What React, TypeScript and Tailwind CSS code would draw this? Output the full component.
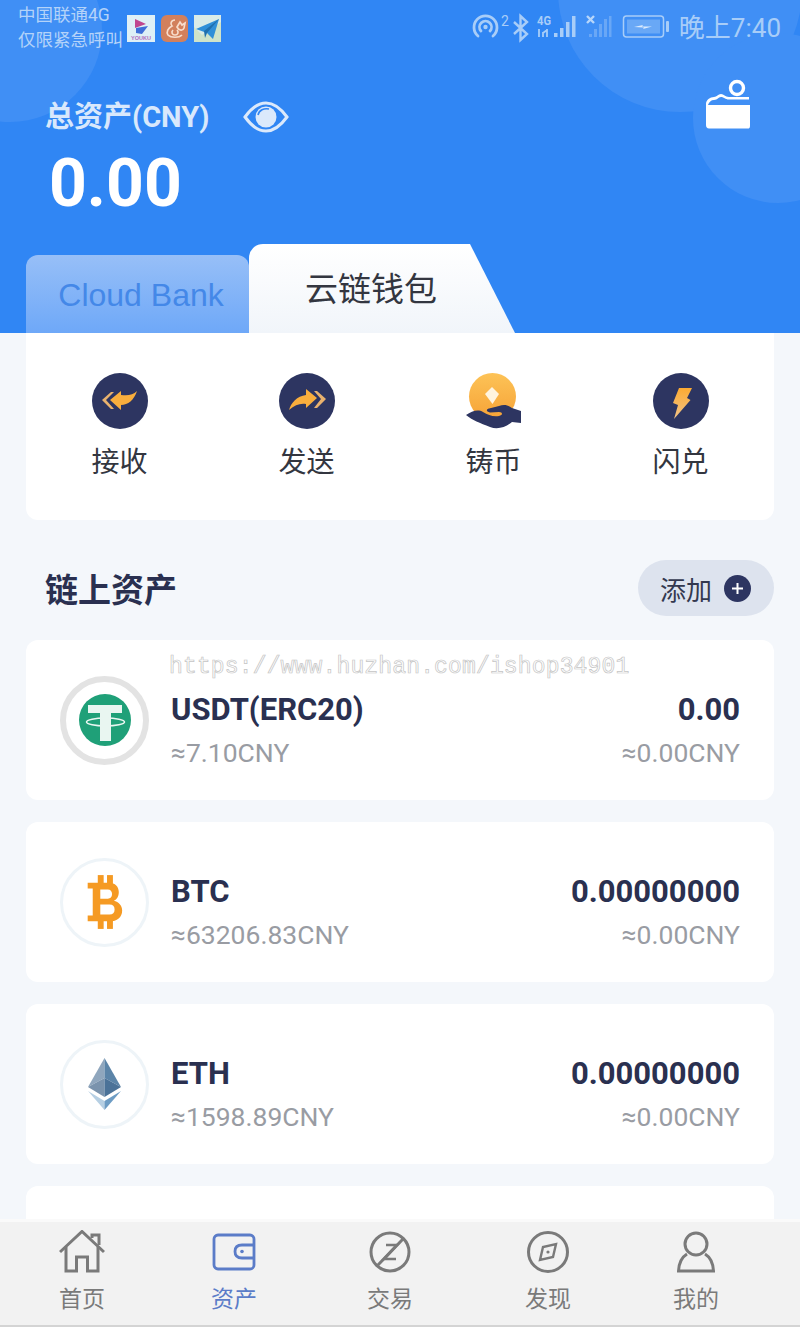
import React from "react";

const Youku = () => (
  <svg width="28" height="27" viewBox="0 0 28 27">
    <rect width="28" height="27" fill="#dff0f6" />
    <path d="M8 4 L19 9 L8 13 Z" fill="#c0478f" />
    <path d="M9 13 L21 11 L15 19 L9 18 Z" fill="#3f6fd8" />
    <text x="14" y="25" textAnchor="middle" fontSize="5.5" fontWeight="700" fill="#b06fc0" fontFamily="Liberation Sans, sans-serif">YOUKU</text>
  </svg>
);

const UC = () => (
  <svg width="27" height="27" viewBox="0 0 27 27">
    <rect width="27" height="27" rx="6" fill="#d2805c" />
    <path d="M14 5 C10 5 9 9 11 11 C7 13 5 17 7 20 C10 23 18 23 21 20 M12 15 C10 17 11 20 14 20 C17 20 18 17 16 15 M16 12 L19 7 L21 10 L24 8 L23 13 C22 16 18 16 16 12Z" fill="none" stroke="#f7dccb" strokeWidth="1.7" />
  </svg>
);

const Plane = () => (
  <svg width="27" height="27" viewBox="0 0 27 27">
    <rect width="27" height="27" fill="#cfe3c9" />
    <path d="M0 0 H27 V7 L8 20 L0 12 Z" fill="#d9ebe8" />
    <path d="M2 14 L25 4 L19 24 L13 18 Z" fill="#2f8fd8" />
    <path d="M25 4 L10 16 L11 23 L13 18 Z" fill="#1f6fae" />
  </svg>
);

const StatusIcons = () => (
  <svg width="198" height="30" viewBox="0 0 198 30" className="shrink-0">
    <g fill="none" stroke="#a8cdf8" strokeWidth="2.8" strokeLinecap="round">
      <path d="M6 23 A11.500 11.500 0 1 1 21 23" />
      <path d="M9 18 A6 6 0 1 1 18 18" />
    </g>
    <circle cx="13.500" cy="14" r="2.200" fill="#a8cdf8" />
    <text x="29" y="13" fontSize="14" fill="#a8cdf8" fontFamily="Roboto, sans-serif">2</text>
    <path d="M42 9 L55 21 L48.500 27 V3 L55 9 L42 21" fill="none" stroke="#a8cdf8" strokeWidth="2.400" />
    <text x="65" y="12" fontSize="12.500" fontWeight="700" fill="#a8cdf8" fontFamily="Roboto, sans-serif" textLength="14" lengthAdjust="spacingAndGlyphs">4G</text>
    <path d="M67 16 V24 M75 24 V16 M71 24 V19 M71 20 L75 17" stroke="#a8cdf8" strokeWidth="1.800" fill="none" />
    <g fill="#a8cdf8">
      <rect x="82" y="20" width="3.500" height="4" />
      <rect x="88" y="15" width="3.500" height="9" />
      <rect x="94" y="9" width="3.500" height="15" />
      <rect x="100" y="3" width="3.500" height="21" />
    </g>
    <path d="M115 3 L122 10 M122 3 L115 10" stroke="#b7d6fa" strokeWidth="2.400" />
    <g fill="#a8cdf8" opacity="0.4">
      <rect x="117" y="21" width="3" height="3" />
      <rect x="122" y="16" width="3" height="8" />
      <rect x="127" y="11" width="3" height="13" />
      <rect x="132" y="6" width="3" height="18" />
      <rect x="137" y="3" width="2.500" height="21" />
    </g>
    <rect x="151.500" y="3" width="40" height="21" rx="3" fill="none" stroke="#a8cdf8" strokeWidth="1.500" />
    <rect x="155" y="6.500" width="33" height="14" fill="#a8cdf8" opacity="0.4" />
    <path d="M162 14 L171 12 L170 13.500 L180 13.500 L171 16 L172 14.500Z" fill="#dcebfd" />
    <rect x="194" y="8" width="3" height="11" rx="1" fill="#a8cdf8" />
  </svg>
);

const Eye = () => (
  <svg width="46" height="32" viewBox="0 0 46 32">
    <path d="M2 16 C10 5 17 2 23 2 C29 2 36 5 44 16 C36 27 29 30 23 30 C17 30 10 27 2 16 Z" fill="none" stroke="#dbe9fb" strokeWidth="3" />
    <circle cx="23" cy="16" r="10.500" fill="#dbe9fb" />
    <path d="M15 14 C16 9 21 7 26 8" fill="none" stroke="#3086f4" strokeWidth="1.600" />
  </svg>
);

const WalletTop = () => (
  <svg width="46" height="50" viewBox="0 0 46 50">
    <circle cx="32" cy="9" r="6.500" fill="none" stroke="#fff" strokeWidth="3.400" />
    <path d="M1 25 C1 21 5 18 9 18 C12 18 13 15 16 15 C19 15 20 18 24 18 H44 V20.500 H24 C20 20.500 19 18 16 18 C13 18 13 21 9 21 C6 21 4 23 3 26 H45 V47 C45 49 44 49.500 43 49.500 H4 C2 49.500 1 48 1 46 Z" fill="#fff" />
  </svg>
);

const Receive = () => (
  <svg width="56" height="56" viewBox="0 0 56 56">
    <circle cx="28" cy="28" r="28" fill="#2d3561" />
    <path d="M10 27 L19 19 L22 19 L14 27 L22 36 L19 36 Z" fill="#e9b26e" />
    <path d="M18 27 L29 18 L29 22 C36 23 41 22 45 18 C42 27 36 32 29 32 L29 37 Z" fill="#f9ae3d" />
  </svg>
);

const Send = () => (
  <svg width="56" height="56" viewBox="0 0 56 56">
    <circle cx="28" cy="28" r="28" fill="#2d3561" />
    <path d="M47 26 L38 18 L35 18 L42 26 L35 35 L38 35 Z" fill="#e9b26e" />
    <path d="M38 25 L27 16 L27 22 C18 23 12 30 10 37 C16 32 21 30 27 31 L27 35 Z" fill="#f9ae3d" />
  </svg>
);

const Mint = () => (
  <svg width="56" height="56" viewBox="0 0 56 56">
    <defs>
      <linearGradient id="coin" x1="0" y1="0" x2="0" y2="1">
        <stop offset="0" stopColor="#fdc357" />
        <stop offset="1" stopColor="#f6a236" />
      </linearGradient>
    </defs>
    <circle cx="26.500" cy="23.500" r="23.500" fill="url(#coin)" />
    <path d="M26 14 L33 21 L26.500 31 L19 21 Z" fill="#fff4df" />
    <path d="M0 42 C6 38 12 36 17 39 C22 42 27 44 33 43 C37 42.500 37 39 33 39 L24 39.500 C20 39 20 36 23 35.500 L33 33 C38 31 42 32 46 35 L55 38 V50 L46 49 C40 54 32 57 24 54 C14 50 6 47 0 42 Z" fill="#2d3561" />
  </svg>
);

const Bolt = () => (
  <svg width="56" height="56" viewBox="0 0 56 56">
    <defs>
      <linearGradient id="bolt" x1="0" y1="0" x2="0" y2="1">
        <stop offset="0" stopColor="#fbaa32" />
        <stop offset="1" stopColor="#f2c488" />
      </linearGradient>
    </defs>
    <circle cx="28" cy="28" r="28" fill="#2d3561" />
    <path d="M26 15 H39 L34 25 L37.500 27 L21 46 L25 32 L20 30 Z" fill="url(#bolt)" />
  </svg>
);

const Plus = () => (
  <span className="flex h-[27px] w-[27px] items-center justify-center rounded-full bg-[#2d3561]">
    <svg width="13" height="13" viewBox="0 0 13 13">
      <path d="M6.500 1 V12 M1 6.500 H12" stroke="#fff" strokeWidth="2" />
    </svg>
  </span>
);

const Tether = () => (
  <svg width="52" height="52" viewBox="0 0 52 52">
    <circle cx="26" cy="26" r="26" fill="#1fa078" />
    <path d="M9 11 H43 V19 H32 V47 H21 V19 H9 Z" fill="#e9f6f1" />
    <ellipse cx="26.500" cy="28" rx="19" ry="4" fill="none" stroke="#e9f6f1" strokeWidth="1.500" />
  </svg>
);

const Btc = () => (
  <svg width="37" height="54" viewBox="0 0 44 64">
    <g fill="#f59a23">
      <rect x="14" y="0" width="7" height="12" />
      <rect x="25" y="0" width="7" height="12" />
      <rect x="14" y="52" width="7" height="12" />
      <rect x="25" y="52" width="7" height="12" />
      <path fillRule="evenodd" d="M2 9 H27 C35 9 39 14 39 20 C39 25 37 29 33 30.500 C39 32 43 36 43 42 C43 50 37 55 28 55 H2 V48 H8 V16 H2 Z M17 17 V28 H26 C29 28 31 26 31 22.500 C31 19 29 17 26 17 Z M17 35 V47 H28 C32 47 34 45 34 41 C34 37 32 35 28 35 Z" />
    </g>
  </svg>
);

const Eth = () => (
  <svg width="33" height="52" viewBox="0 0 33 52">
    <path d="M16.500 0 L0 29 L16.500 20 Z" fill="#8fa6bd" />
    <path d="M16.500 0 L33 29 L16.500 20 Z" fill="#5b84a8" />
    <path d="M0 29 L16.500 20 V39 Z" fill="#7a93ad" />
    <path d="M33 29 L16.500 20 V39 Z" fill="#4b7298" />
    <path d="M0 33 L16.500 43 V52 Z" fill="#b6cfe3" />
    <path d="M33 33 L16.500 43 V52 Z" fill="#6d9cc4" />
  </svg>
);

const HomeIcon = () => (
  <svg width="46" height="44" viewBox="0 0 46 44" fill="none" stroke="#7a7a7a" strokeWidth="3">
    <path d="M1 22 L23 1.500 L45 22" />
    <path d="M33 8 L33 5 H40 V15" />
    <path d="M7 17 V41 H17.500 V27 H28.500 V41 H39 V17" />
  </svg>
);

const WalletIcon = () => (
  <svg width="44" height="38" viewBox="0 0 44 38" fill="none" stroke="#5b7cc8" strokeWidth="2.800">
    <rect x="2" y="2" width="40" height="34" rx="4" />
    <path d="M42 12 H30 C25 12 23 15 23 18.500 C23 22 25 25 30 25 H42" />
    <circle cx="30" cy="18.500" r="1.800" fill="#5b7cc8" stroke="none" />
  </svg>
);

const TradeIcon = () => (
  <svg width="42" height="42" viewBox="0 0 42 42" fill="none" stroke="#7a7a7a" strokeWidth="3">
    <circle cx="21" cy="21" r="19" />
    <path d="M8 35 L34 8" />
    <path d="M17 14 H28 L15 28 H27" strokeWidth="2.600" />
  </svg>
);

const CompassIcon = () => (
  <svg width="42" height="42" viewBox="0 0 42 42" fill="none" stroke="#7a7a7a" strokeWidth="3">
    <circle cx="21" cy="21" r="19.500" />
    <path d="M13 29 L16 16 L29 13 L26 26 Z" strokeWidth="2.400" />
    <circle cx="21" cy="21" r="1.600" fill="#7a7a7a" stroke="none" />
  </svg>
);

const UserIcon = () => (
  <svg width="38" height="42" viewBox="0 0 38 42" fill="none" stroke="#7a7a7a" strokeWidth="3">
    <circle cx="19" cy="13" r="11" />
    <path d="M10 23 C5 26 2 31 1.500 40 H36.500 C36 31 33 26 28 23" />
  </svg>
);

const actions = [
  { label: "接收", icon: <Receive /> },
  { label: "发送", icon: <Send /> },
  { label: "铸币", icon: <Mint /> },
  { label: "闪兑", icon: <Bolt /> },
];

const coins = [
  { name: "USDT(ERC20)", rate: "≈7.10CNY", amount: "0.00", value: "≈0.00CNY", icon: <Tether />, ring: "border-[6px] border-[#e3e3e3]" },
  { name: "BTC", rate: "≈63206.83CNY", amount: "0.00000000", value: "≈0.00CNY", icon: <Btc />, ring: "border-[3px] border-[#eef4f8]" },
  { name: "ETH", rate: "≈1598.89CNY", amount: "0.00000000", value: "≈0.00CNY", icon: <Eth />, ring: "border-[3px] border-[#eef4f8]" },
];

const tabs = [
  { label: "首页", icon: <HomeIcon />, cls: "ml-[52px] text-[#7a7a7a]" },
  { label: "资产", icon: <WalletIcon />, cls: "ml-[92px] text-[#5b7cc8]" },
  { label: "交易", icon: <TradeIcon />, cls: "ml-[96px] text-[#7a7a7a]" },
  { label: "发现", icon: <CompassIcon />, cls: "ml-[98px] text-[#7a7a7a]" },
  { label: "我的", icon: <UserIcon />, cls: "ml-[88px] text-[#7a7a7a]" },
];

export default function App() {
  return (
    <div className="relative flex h-[1327px] w-[800px] flex-col overflow-hidden bg-[#f4f7fb] [font-family:Roboto,'Noto_Sans_CJK_SC',sans-serif]">
      {/* Blue header */}
      <header className="relative flex h-[333px] shrink-0 flex-col overflow-hidden bg-[#3086f4]">
        <div className="absolute left-[-82px] top-[-62px] h-[184px] w-[184px] rounded-full bg-[#408ff5]" />
        <div className="absolute left-[558px] top-[-132px] h-[244px] w-[244px] rounded-full bg-[#408ff5]" />
        <div className="absolute left-[693px] top-[33px] h-[170px] w-[170px] rounded-full bg-[#408ff5]" />

        <div className="relative flex h-[56px] items-center pl-[18px] pr-[19px]">
          <div className="w-[109px] text-[17.5px] leading-[25px] text-[#b4d3f9]">
            <div>中国联通4G</div>
            <div className="whitespace-nowrap">仅限紧急呼叫</div>
          </div>
          <div className="flex items-center gap-[6px]">
            <Youku />
            <UC />
            <Plane />
          </div>
          <div className="ml-auto flex items-center gap-[9px]">
            <StatusIcons />
            <span className="whitespace-nowrap text-[26px] leading-[32px] text-[#a8cdf8]">晚上7:40</span>
          </div>
        </div>

        <div className="relative flex flex-1 items-start justify-between pl-[45px] pr-[49px]">
          <div>
            <div className="mt-[43px] flex h-[36px] items-center gap-[34px]">
              <span className="text-[29px] font-bold leading-[36px] text-[#d8e8fc]">总资产(CNY)</span>
              <Eye />
            </div>
            <div className="ml-[4px] mt-[10px] text-[66px] font-bold leading-[78px] text-white">0.00</div>
          </div>
          <div className="mt-[23px]">
            <WalletTop />
          </div>
        </div>

        <div className="relative flex items-end pl-[26px]">
          <div className="flex h-[78px] w-[223px] items-center justify-center rounded-t-[12px] bg-gradient-to-b from-[#97bff7] to-[#6ea8f8] pl-[7px] pt-[2px] text-[32px] text-[#4488e8] [font-family:'Liberation_Sans',sans-serif]">
            Cloud Bank
          </div>
          <div className="flex h-[89px] w-[266px] items-center rounded-tl-[14px] bg-gradient-to-b from-white to-[#f1f5fa] pl-[56px] pt-[2px] text-[33px] text-[#333640] [clip-path:polygon(0_0,221px_0,266px_100%,0_100%)]">
            云链钱包
          </div>
        </div>
      </header>

      {/* Scrolling content */}
      <main className="flex min-h-0 flex-1 flex-col overflow-hidden px-[26px]">
        <section className="grid h-[187px] shrink-0 grid-cols-4 rounded-b-[12px] bg-white pt-[40px]">
          {actions.map((a) => (
            <div key={a.label} className="flex flex-col items-center">
              {a.icon}
              <span className="mt-[14px] text-[28px] leading-[40px] text-[#33363f]">{a.label}</span>
            </div>
          ))}
        </section>

        <div className="mt-[40px] flex h-[56px] shrink-0 items-center justify-between pl-[19px]">
          <h2 className="pt-[5px] text-[33px] font-bold leading-[44px] text-[#2a3050]">链上资产</h2>
          <button className="flex h-[56px] w-[136px] items-center gap-[12px] rounded-full bg-[#dde3ee] pl-[22px]">
            <span className="pt-[5px] text-[26px] leading-[36px] text-[#33384f]">添加</span>
            <Plus />
          </button>
        </div>

        <div className="mt-[24px] flex shrink-0 flex-col gap-[22px]">
          {coins.map((c) => (
            <article key={c.name} className="flex h-[160px] items-center rounded-[12px] bg-white pl-[34px] pr-[34px]">
              <div className={`flex h-[89px] w-[89px] shrink-0 items-center justify-center rounded-full ${c.ring}`}>
                {c.icon}
              </div>
              <div className="ml-[22px] flex flex-col pt-[21px]">
                <span className="text-[31px] font-bold leading-[44px] text-[#2a3050]">{c.name}</span>
                <span className="text-[26.5px] leading-[42px] text-[#999ca3]">{c.rate}</span>
              </div>
              <div className="ml-auto flex flex-col items-end pt-[21px]">
                <span className="text-[31px] font-bold leading-[44px] text-[#2a3050]">{c.amount}</span>
                <span className="text-[26.5px] leading-[42px] text-[#999ca3]">{c.value}</span>
              </div>
            </article>
          ))}
          <div className="h-[60px] rounded-t-[12px] bg-white" />
        </div>
      </main>

      {/* Bottom nav */}
      <nav className="relative flex h-[108px] shrink-0 flex-col border-b-2 border-t-[3px] border-b-[#d4d4d4] border-t-[#fafafa] bg-[#f2f2f2] pt-[2px]">
        <div className="flex">
          {tabs.map((t) => (
            <div key={t.label} className={`flex w-[60px] shrink-0 flex-col items-center ${t.cls}`}>
              <div className="flex h-[56px] items-center">{t.icon}</div>
              <span className="mt-[4px] text-[23px] leading-[32px]">{t.label}</span>
            </div>
          ))}
        </div>
      </nav>

      {/* Watermark overlay */}
      <div className="pointer-events-none absolute left-[169px] top-[652px] whitespace-nowrap text-[23px] leading-[30px] tracking-[0.15px] text-transparent [-webkit-text-stroke:0.7px_#c4c4c4] [font-family:'Liberation_Mono',monospace]">
        https://www.huzhan.com/ishop34901
      </div>
    </div>
  );
}
